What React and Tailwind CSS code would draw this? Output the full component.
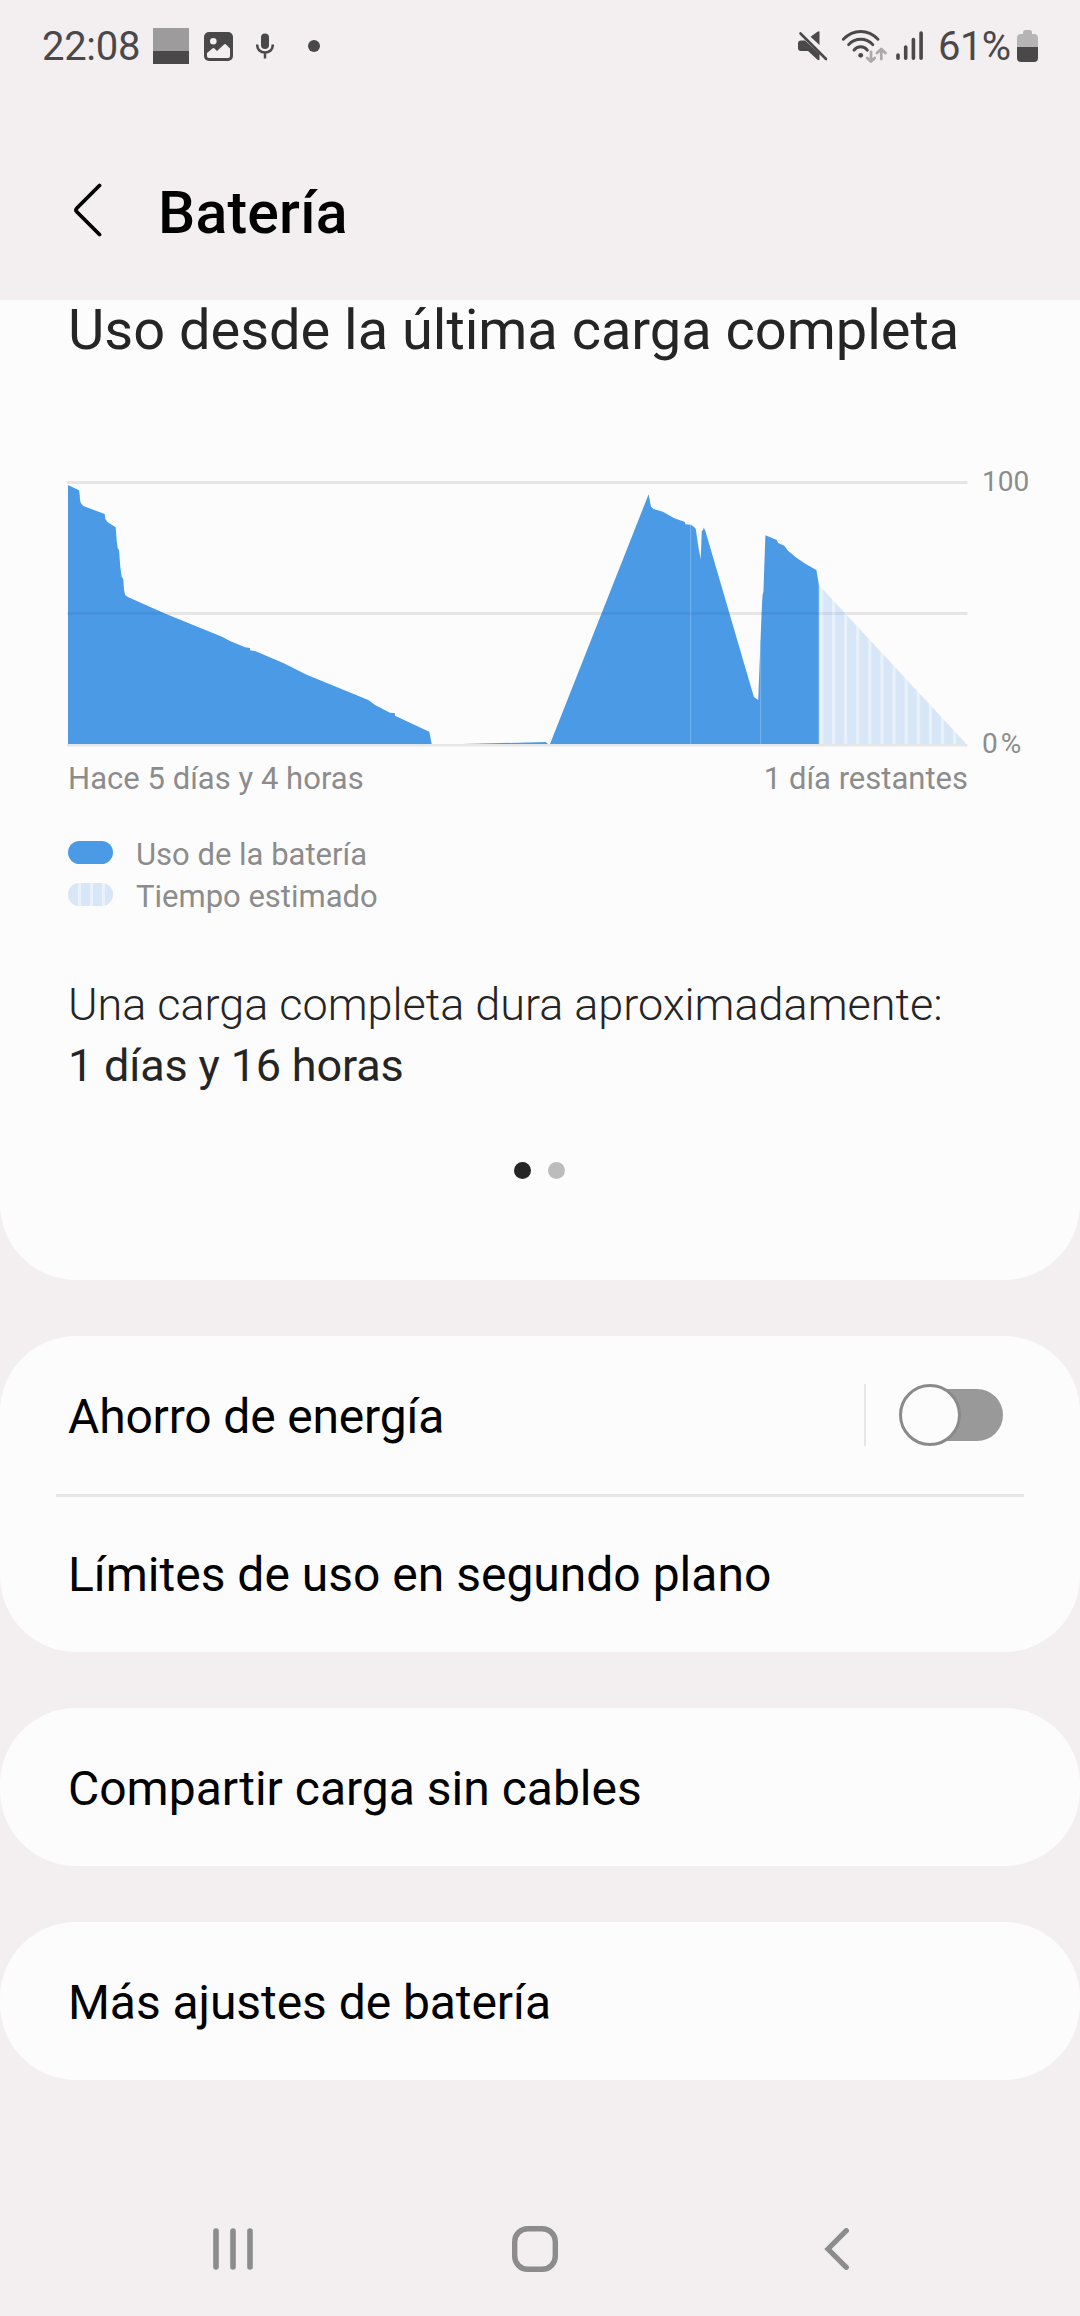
const BLUE = "#4b9ae6";

const usageFirst =
  "M68 744V485L79 490.3L79.7 495Q80 502 81 503.3Q82 505.5 84 506.3L104.7 514L105.3 519L107.7 522.3L115.7 527.3L116.7 541L117.7 548.3L119 550L120.3 567L121.7 576.7L123.3 579.3L124 590L125.3 595.3L128.3 597.2L166.7 614.3L222 636.7L230 641L245 647.3L250 648V650.3L255 651L283.3 663L306.7 674.7L368.3 700L375 705L390 712.7L395 713.3V715.7L429.3 731.7L430.3 736.7L431.7 744Z";
const usageSecond =
  "M550 744L648.6 494.3L651 506.7L653.6 509L662.9 511.7L674.3 518.3L685 522L685.4 524.3L690.7 524.7L693.5 526.5L695.7 528.7L698.6 548.3L700.7 559L701.8 531L702.9 530L703.6 527.3L704 531L704.5 528L753.9 697L758.2 700L761.6 613.3L762.5 595L763.4 592L765.4 535.3L776.8 540L778.2 543L784.3 545.7L787.9 550.7L790.5 552.7L795.7 557.3L805.7 564L816.4 570L818.9 585V744Z";
const estimate = "M818.9 585L966.4 744H818.9Z";

function Chart() {
  return (
    <svg className="mt-[14px] h-[268px] w-[902px] shrink-0" viewBox="67 480 902 268">
      <defs>
        <pattern id="stripes" x="820" y="480" width="12.1" height="268" patternUnits="userSpaceOnUse">
          <rect width="12.1" height="268" fill="#d8e7f7" />
          <rect width="3" height="268" fill="#e9f2fb" />
        </pattern>
        <clipPath id="filled">
          <path d={usageFirst} />
          <path d={usageSecond} />
          <path d={estimate} />
        </clipPath>
      </defs>
      <path d="M67 482.5H967.5M67 613.5H967.5" stroke="#e6e6e6" strokeWidth="3" />
      <path d={usageFirst} fill={BLUE} />
      <path d="M462 744L545.7 742L548 744Z" fill={BLUE} />
      <path d={usageSecond} fill={BLUE} />
      <path d={estimate} fill="url(#stripes)" />
      <path d="M690.6 525V744M760.6 640V744" stroke="#8dbff0" strokeWidth="0.7" />
      <path d="M67 613.5H967.5" stroke="#002266" strokeOpacity="0.07" strokeWidth="3" clipPath="url(#filled)" />
      <path d="M67 745.3H967.5" stroke="#e4e6e8" strokeWidth="2.6" />
    </svg>
  );
}

function StatusBar() {
  return (
    <div className="flex h-[92px] items-center justify-between pr-[42px] pl-[42px] text-[40px] leading-[90px] text-[#4a4849]">
      <div className="flex items-center">
        <span className="w-[111px] pt-[2px] tracking-[-0.3px]">22:08</span>
        <svg className="h-9 w-9" viewBox="0 0 36 36">
          <path d="M0 0H36V23H0Z" fill="#9d9b9c" />
          <path d="M0 23H36V36H0Z" fill="#4a4849" />
        </svg>
        <svg className="ml-[15px] h-[29px] w-[29px]" viewBox="0 0 29 29">
          <rect width="29" height="29" rx="5" fill="#4a4849" />
          <circle cx="9.3" cy="9.3" r="3.3" fill="#f3eff1" />
          <path d="M3 21L8.5 16.4Q9.6 15.5 10.5 16.4L13 19L20 12.5Q21 11.7 22 12.5L26 16.4V24Q26 26 24 26H5Q3 26 3 24Z" fill="#f3eff1" />
        </svg>
        <svg className="ml-[23px] h-[26px] w-[18px]" viewBox="0 0 18 26">
          <rect x="5" y="0.5" width="8" height="15.5" rx="4" fill="#4a4849" />
          <path d="M1.2 11.5V12C1.2 16.5 4.5 19.6 9 19.6S16.8 16.5 16.8 12V11.5M9 19.6V25.5" stroke="#4a4849" strokeWidth="2.5" fill="none" />
        </svg>
        <span className="ml-[34px] h-3 w-3 rounded-full bg-[#4a4849]" />
      </div>
      <div className="flex items-center">
        <svg className="h-[30px] w-[30px]" viewBox="798 32 30 30">
          <path d="M819.5 32.5V46L810.5 37.8L817.5 32.8Q819 31.8 819.5 32.5Z" fill="#4a4849" />
          <path d="M801 41.5H805L819.5 55V60Q819.5 62 817.5 60.8L808 52H801Q798 52 798 49V44.5Q798 41.5 801 41.5Z" fill="#4a4849" />
          <path d="M800.5 34.5L826 60" stroke="#4a4849" strokeWidth="2.6" strokeLinecap="round" />
        </svg>
        <svg className="ml-[13px] h-[34px] w-[46px]" viewBox="841 29 46 34">
          <g stroke="#4a4849" strokeWidth="2.9" strokeLinecap="round" fill="none">
            <path d="M843.3 39.3Q851 31.5 860.7 31.5T878 39.3" />
            <path d="M848.6 44.6Q853.5 39.2 860.7 39.2T872.8 44.6" />
            <path d="M854 50.2Q856.5 46.8 860.7 46.8T867.3 50.2" />
          </g>
          <circle cx="860.7" cy="55.3" r="2.4" fill="#4a4849" />
          <path d="M871 52V61M867.3 58L871 61.6L874.7 58M881.3 59V49.5M877 53L881.3 49L885.5 53" stroke="#aba9aa" strokeWidth="2.8" strokeLinecap="round" strokeLinejoin="round" fill="none" />
        </svg>
        <svg className="ml-[9px] h-[30px] w-[28px]" viewBox="896 32 28 30">
          <path d="M898 56V59.3M905.7 48V59.3M913.4 40.5V59.3M921.1 34V59.3" stroke="#4a4849" strokeWidth="3.6" strokeLinecap="round" />
        </svg>
        <span className="ml-[14px] w-[79px] pt-[2px] tracking-[-0.6px]">61%</span>
        <svg className="h-[32px] w-[21px]" viewBox="0 0 21 32">
          <path d="M6 3Q6 0 8 0H13Q15 0 15 3V4H17Q21 4 21 8V17H0V8Q0 4 4 4H6Z" fill="#b7b4b5" />
          <path d="M0 17H21V28Q21 32 17 32H4Q0 32 0 28Z" fill="#4a4849" />
        </svg>
      </div>
    </div>
  );
}

function Header() {
  return (
    <header className="flex h-[208px] items-center pt-[34px] pl-[73px]">
      <svg className="-mt-[6px] h-[54px] w-[30px]" viewBox="0 0 30 54">
        <path d="M26.5 2.5L4 25Q2 27 4 29L26.5 51.5" stroke="#000" strokeWidth="3.8" strokeLinecap="round" fill="none" />
      </svg>
      <h1 className="ml-[55px] text-[59px] leading-[70px] font-medium tracking-[0.2px] text-black">Batería</h1>
    </header>
  );
}

function UsageCard() {
  return (
    <section className="h-[980px] rounded-b-[76px] bg-[#fcfcfc] text-[#252525]">
      <h2 className="pl-[68px] text-[56px] leading-[60px] tracking-[-0.03px] whitespace-nowrap">Uso desde la última carga completa</h2>
      <div className="mt-[106px] flex h-[294px] pl-[67px] text-[28px] leading-[32px] text-[#8c8c8c]">
        <Chart />
        <div className="ml-[13px] flex flex-col justify-between">
          <span>100</span>
          <span className="flex gap-[3px]"><span>0</span><span>%</span></span>
        </div>
      </div>
      <div className="flex w-[968px] justify-between pt-px pl-[68px] text-[31px] leading-[36px] text-[#8c8c8c]">
        <span className="tracking-[0.03px]">Hace 5 días y 4 horas</span>
        <span>1 día restantes</span>
      </div>
      <div className="mt-[37px] pl-[68px] text-[31px] leading-[42px] text-[#8c8c8c]">
        <div className="flex items-center">
          <span className="-mt-[5px] h-[23px] w-[45px] rounded-full bg-[#4b9ae6]" />
          <span className="ml-[23px]">Uso de la batería</span>
        </div>
        <div className="flex items-center">
          <span className="-mt-[5px] flex h-[23px] w-[45px] gap-[3px] overflow-hidden rounded-full bg-[#e9f2fb]">
            <span className="w-[10px] bg-[#d8e7f7]" />
            <span className="w-[9px] bg-[#d8e7f7]" />
            <span className="w-[9px] bg-[#d8e7f7]" />
            <span className="w-[8px] bg-[#d8e7f7]" />
          </span>
          <span className="ml-[23px]">Tiempo estimado</span>
        </div>
      </div>
      <div className="mt-[56px] pl-[68px] text-[45px] leading-[61px]">
        <p className="font-light tracking-[-0.03px]">Una carga completa dura aproximadamente:</p>
        <p className="tracking-[-0.18px]">1 días y 16 horas</p>
      </div>
      <div className="mt-[66px] flex justify-center gap-[17px] pr-[2px]">
        <span className="h-[17px] w-[17px] rounded-full bg-[#252525]" />
        <span className="h-[17px] w-[17px] rounded-full bg-[#bcbcbc]" />
      </div>
    </section>
  );
}

function Row({ label, className = "", children }) {
  return (
    <div className="flex h-[158px] items-center justify-between pr-[77px] pl-[68px] text-[48px] text-black">
      <span className={`pt-[3px] whitespace-nowrap ${className}`}>{label}</span>
      {children}
    </div>
  );
}

function Toggle() {
  return (
    <div className="flex items-center">
      <span className="h-[62px] w-[2px] bg-[#e6e6e6]" />
      <span className="relative ml-[33px] flex h-[62px] w-[104px] items-center justify-end">
        <span className="h-[52px] w-[90px] rounded-full bg-[#999999]" />
        <span className="absolute top-0 left-0 h-[62px] w-[62px] rounded-full border-3 border-[#8a8a8a] bg-[#fcfcfc]" />
      </span>
    </div>
  );
}

export default function App() {
  return (
    <div className="flex h-[2316px] w-[1080px] flex-col overflow-hidden bg-[#f3eff1] font-[Roboto,sans-serif]">
      <StatusBar />
      <Header />
      <main className="flex flex-col gap-[56px]">
        <UsageCard />
        <section className="rounded-[76px] bg-[#fcfcfc]">
          <Row label="Ahorro de energía" className="tracking-[-0.17px]">
            <Toggle />
          </Row>
          <div className="mx-[56px] -mb-[3px] h-[3px] bg-[#e6e6e6]" />
          <Row label="Límites de uso en segundo plano" />
        </section>
        <section className="rounded-[76px] bg-[#fcfcfc]">
          <Row label="Compartir carga sin cables" />
        </section>
        <section className="rounded-[76px] bg-[#fcfcfc]">
          <Row label="Más ajustes de batería" className="tracking-[-0.06px]" />
        </section>
      </main>
      <nav className="mt-auto flex h-[134px] items-center pl-[213px]">
        <svg className="h-[42px] w-[40px]" viewBox="0 0 40 42">
          <path d="M3 3V39M20 3V39M37 3V39" stroke="#8c8c8c" strokeWidth="5.6" strokeLinecap="round" />
        </svg>
        <svg className="ml-[259px] h-[46px] w-[46px]" viewBox="0 0 46 46">
          <rect x="2.7" y="2.7" width="40.6" height="40.6" rx="13" stroke="#8c8c8c" strokeWidth="5.4" fill="none" />
        </svg>
        <svg className="ml-[266px] h-[42px] w-[25px]" viewBox="0 0 25 42">
          <path d="M22.3 2.7L4 21L22.3 39.3" stroke="#8c8c8c" strokeWidth="5.2" strokeLinecap="round" fill="none" />
        </svg>
      </nav>
    </div>
  );
}
